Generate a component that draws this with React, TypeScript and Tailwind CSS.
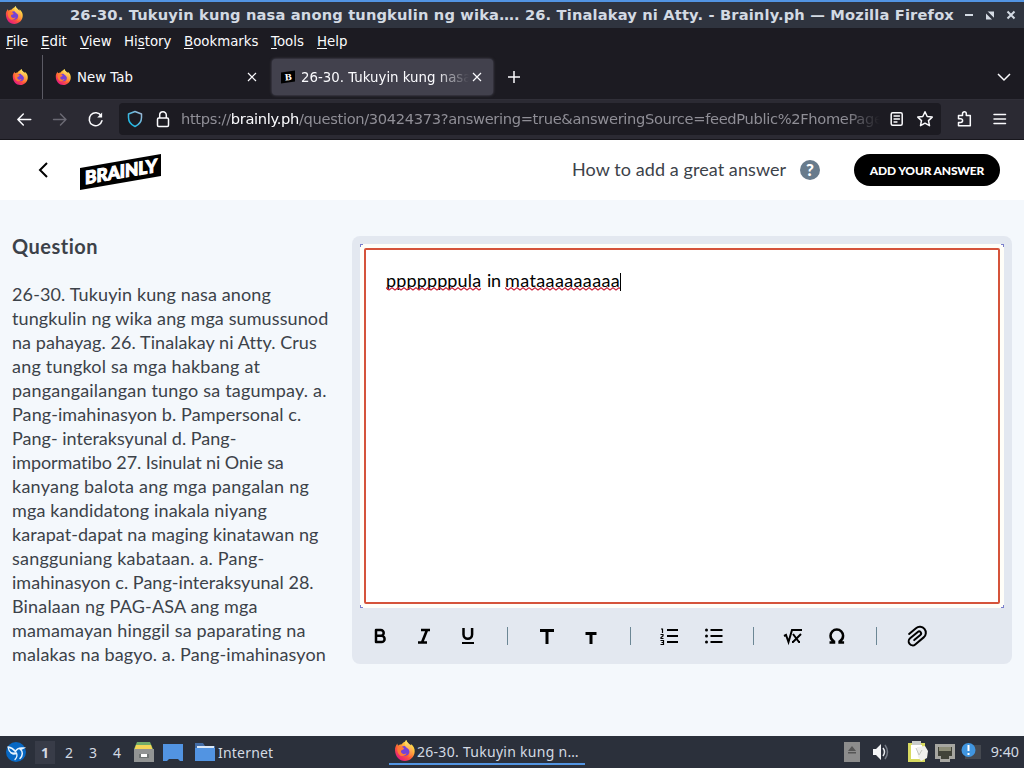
import React, { useState } from 'react';

const questionLines = [
  { text: '26-30. Tukuyin kung nasa anong', tracking: 'tracking-[0.13px]' },
  { text: 'tungkulin ng wika ang mga sumussunod', tracking: 'tracking-[0.11px]' },
  { text: 'na pahayag. 26. Tinalakay ni Atty. Crus', tracking: 'tracking-[0.07px]' },
  { text: 'ang tungkol sa mga hakbang at', tracking: 'tracking-[0.21px]' },
  { text: 'pangangailangan tungo sa tagumpay. a.', tracking: 'tracking-[0.2px]' },
  { text: 'Pang-imahinasyon b. Pampersonal c.', tracking: 'tracking-[0.08px]' },
  { text: 'Pang- interaksyunal d. Pang-', tracking: 'tracking-[0.01px]' },
  { text: 'impormatibo 27. Isinulat ni Onie sa', tracking: 'tracking-[-0.08px]' },
  { text: 'kanyang balota ang mga pangalan ng', tracking: 'tracking-[0.25px]' },
  { text: 'mga kandidatong inakala niyang', tracking: 'tracking-[0.14px]' },
  { text: 'karapat-dapat na maging kinatawan ng', tracking: 'tracking-[0.06px]' },
  { text: 'sangguniang kabataan. a. Pang-', tracking: 'tracking-[0.2px]' },
  { text: 'imahinasyon c. Pang-interaksyunal 28.', tracking: 'tracking-[0.03px]' },
  { text: 'Binalaan ng PAG-ASA ang mga', tracking: 'tracking-[0.17px]' },
  { text: 'mamamayan hinggil sa paparating na', tracking: 'tracking-[0.15px]' },
  { text: 'malakas na bagyo. a. Pang-imahinasyon', tracking: 'tracking-[0.13px]' },
];

const menuItems = [
  { before: '', key: 'F', after: 'ile', width: 'w-[35px]' },
  { before: '', key: 'E', after: 'dit', width: 'w-[39px]' },
  { before: '', key: 'V', after: 'iew', width: 'w-[44px]' },
  { before: 'Hi', key: 's', after: 'tory', width: 'w-[60px]' },
  { before: '', key: 'B', after: 'ookmarks', width: 'w-[87px]' },
  { before: '', key: 'T', after: 'ools', width: 'w-[46px]' },
  { before: '', key: 'H', after: 'elp', width: 'w-[40px]' },
];

function Firefox({ className }: { className: string }) {
  return (
    <svg viewBox="0 0 20 20" className={className}>
      <defs>
        <linearGradient id="fox" x1="0.85" y1="0.05" x2="0.2" y2="0.95">
          <stop offset="0" stopColor="#fff04a" />
          <stop offset="0.35" stopColor="#ffb43a" />
          <stop offset="0.62" stopColor="#ff5b35" />
          <stop offset="1" stopColor="#e31587" />
        </linearGradient>
        <linearGradient id="flame" x1="0.6" y1="0" x2="0.5" y2="1">
          <stop offset="0" stopColor="#fff36b" />
          <stop offset="1" stopColor="#ff7139" />
        </linearGradient>
      </defs>
      <path d="M1 10C.7 7 2 5 3.3 3.4c0 1 .2 1.500.6 2C5 4.400 6 4.200 7 4.300 8.500 3 9 2 10.500 1.700c.3-.7.8-1.300 1.500-1.700C12 1.800 13 3 14.300 4.200c.8.2 1.500.6 2 1.100-.1-.8-.3-1.300-.7-1.800C18.500 5 20 8 19.700 11.200 19.300 16.200 15.400 20 10.300 20 5 20 1.300 15.700 1 10Z" fill="url(#fox)" />
      <circle cx="10.200" cy="10.500" r="4.700" fill="#7542d6" />
      <path d="M11.500 0C12 2.500 16.500 4 17.500 8.200c1 4.300-1.200 8-5 8.800 3-2 3.400-5.500 1.500-7.900-1.600-1.900-3.800-2.100-3.500-5C10.600 2.400 10.800 1 11.500 0Z" fill="url(#flame)" />
      <path d="M3.500 6.500C6 5.400 8 6.500 9.600 8.200c-.3 1.200-1.800 1.200-2.700 1.900-.8 1 .1 2.900 1.900 3.200 1.300.2 2.200-.5 3.200-.7-1 2.200-3.400 3.200-5.700 2.300C3.500 13.500 2.500 9.500 3.500 6.500Z" fill="#ff7a35" />
    </svg>
  );
}

function TitleBar() {
  return (
    <div className="flex h-7 items-center border-t-2 border-[#5294e2] bg-[#2f343f]">
      <Firefox className="ml-[5px] h-[18px] w-[18px]" />
      <div className="ml-[47px] w-[888px] whitespace-nowrap text-[14.67px] font-bold tracking-[0.155px] text-[#d3dae3]">
        26-30. Tukuyin kung nasa anong tungkulin ng wika…. 26. Tinalakay ni Atty. - Brainly.ph — Mozilla Firefox
      </div>
      <svg viewBox="0 0 60 20" className="h-5 w-[60px] shrink-0" fill="none" stroke="#d3dae3">
        <path d="M7 10h8" strokeWidth="2" />
        <path d="M29.500 6.500h6.500v6.500zM28 8.500v6h6z" fill="#d3dae3" stroke="none" />
        <path d="m29 7 7 7" stroke="#2f343f" strokeWidth="1.500" />
        <path d="m49.500 6.500 7 7m0-7-7 7" strokeWidth="2" />
      </svg>
    </div>
  );
}

function MenuBar() {
  return (
    <div className="flex h-[27px] items-center pl-[6px] text-[13.33px] text-[#fbfbfe]">
      {menuItems.map((item) => (
        <div key={item.key + item.after} className={item.width + ' whitespace-nowrap'}>
          {item.before}
          <span className="underline underline-offset-2">{item.key}</span>
          {item.after}
        </div>
      ))}
    </div>
  );
}

function Close() {
  return (
    <svg viewBox="0 0 10 10" className="h-[10px] w-[10px] shrink-0" stroke="#fbfbfe" strokeWidth="1.200">
      <path d="m1 1 8 8m0-8-8 8" />
    </svg>
  );
}

function Tabs() {
  return (
    <div className="flex h-[44px] items-center text-[13.33px] text-[#fbfbfe]">
      <div className="flex h-full w-[43px] items-center border-r border-[#5b5a64] pl-3">
        <Firefox className="h-4 w-4" />
      </div>
      <div className="flex h-9 w-[229px] items-center pl-3">
        <Firefox className="h-4 w-4" />
        <span className="ml-[6px] w-[170px] pt-[2px]">New Tab</span>
        <Close />
      </div>
      <div className="flex h-9 w-[221px] items-center rounded bg-[#42414d] pl-[8px] shadow-[0_0_3px_#5b5a66]">
        <svg viewBox="0 0 16 16" className="h-4 w-4 shrink-0">
          <path d="M1 3.500 15 1.500v11L1 14.500Z" fill="#000" />
          <text x="4.800" y="11.200" fill="#fff" fontSize="8.500" fontWeight="900" fontFamily="DejaVu Serif, serif" transform="rotate(-5 8 8)">B</text>
        </svg>
        <span className="ml-[5px] w-[168px] shrink-0 overflow-hidden pt-[2px] whitespace-nowrap [mask-image:linear-gradient(to_right,black_80%,transparent_100%)]">
          26-30. Tukuyin kung nasa
        </span>
        <span className="ml-[3px]"><Close /></span>
      </div>
      <svg viewBox="0 0 14 14" className="ml-[14px] h-[14px] w-[14px]" stroke="#fbfbfe" strokeWidth="1.500">
        <path d="M7 1v12M1 7h12" />
      </svg>
      <svg viewBox="0 0 14 10" className="mr-[13px] ml-auto h-[10px] w-[14px]" fill="none" stroke="#fbfbfe" strokeWidth="1.500">
        <path d="m1 2 6 6 6-6" />
      </svg>
    </div>
  );
}

function NavBar() {
  return (
    <div className="flex h-[41px] items-center border-t border-b border-t-[#302f38] border-b-[#17161c] bg-[#2b2a33] pb-px">
      <svg viewBox="0 0 120 32" className="h-8 w-[119px] shrink-0" fill="none" stroke="#fbfbfe" strokeWidth="1.500" strokeLinecap="round" strokeLinejoin="round">
        <path d="M31 16.500H18m5.500-5.500L18 16.500l5.500 5.500" />
        <path d="M54 16.500h12.500m-5.500-5.500 5.500 5.500-5.500 5.500" stroke="#6a6973" />
        <path d="M102 12.800a6.500 6.500 0 1 0 .8 5" />
        <path d="M103 9.500v5h-5z" fill="#fbfbfe" stroke="none" />
      </svg>
      <div className="flex h-8 w-[822px] shrink-0 items-center rounded bg-[#1c1b22]">
        <svg viewBox="0 0 62 32" className="h-8 w-[62px] shrink-0" fill="none" strokeWidth="1.500">
          <defs>
            <linearGradient id="shield" x1="0" y1="1" x2="1" y2="0">
              <stop offset="0" stopColor="#00b8e8" />
              <stop offset="1" stopColor="#a9b9d6" />
            </linearGradient>
          </defs>
          <path d="M16 8.500 22.500 11v3.500c0 4-3 7.500-6.500 9-3.500-1.500-6.500-5-6.500-9V11Z" stroke="url(#shield)" strokeLinejoin="round" />
          <rect x="38.500" y="15" width="11" height="8.500" rx="1.200" stroke="#fbfbfe" />
          <path d="M40.700 15v-3a3.300 3.300 0 0 1 6.600 0v3" stroke="#fbfbfe" />
        </svg>
        <div className="w-[699px] overflow-hidden whitespace-nowrap text-[14.67px] tracking-[-0.34px] text-[#8f8e96] [mask-image:linear-gradient(to_right,black_95%,transparent_100%)]">
          https://<span className="text-[#fbfbfe]">brainly.ph</span>/question/30424373?answering=true&amp;answeringSource=feedPublic%2FhomePage
        </div>
        <svg viewBox="0 0 61 32" className="h-8 w-[61px] shrink-0" fill="none" stroke="#fbfbfe" strokeWidth="1.500" strokeLinejoin="round" strokeLinecap="round">
          <rect x="11.200" y="9.700" width="11" height="12.600" rx="1.500" />
          <path d="M14 13h5.500m-5.500 3h5.500m-5.500 3h3" strokeWidth="1.300" />
          <path d="m45 8.800 2.200 4.700 5 .6-3.700 3.500 1 5.100-4.500-2.500-4.500 2.500 1-5.100-3.700-3.500 5-.6Z" />
        </svg>
      </div>
      <svg viewBox="0 0 83 32" className="h-8 w-[83px] shrink-0" fill="none" stroke="#fbfbfe" strokeWidth="1.500" strokeLinejoin="round">
        <path d="M17.500 12.500h4v-1.800a1.900 1.900 0 0 1 3.800 0v1.800h4v10.300H17.500v-3.300h2.200a1.900 1.900 0 0 0 0-3.800h-2.200z" />
        <path d="M53 11.500h11.500M53 16h11.500M53 20.500h11.500" strokeLinecap="round" />
      </svg>
    </div>
  );
}

function BrainlyHeader() {
  return (
    <header className="flex h-[60px] items-center bg-white">
      <svg viewBox="0 0 10 16" className="ml-[38px] h-4 w-[10px]" fill="none" stroke="#000" strokeWidth="2">
        <path d="M9 1 2 8l7 7" />
      </svg>
      <svg viewBox="0 0 82 40" className="ml-[32px] h-10 w-[82px] overflow-visible">
        <path d="M0 18 81 4v22L0 40Z" fill="#000" />
        <text x="5" y="34" fill="#fff" stroke="#fff" strokeWidth="1.100" fontFamily="Lato, sans-serif" fontSize="18" fontWeight="900" textLength="72" lengthAdjust="spacingAndGlyphs" transform="matrix(1 -.173 0 1 0 1)">BRAINLY</text>
      </svg>
      <div className="ml-auto w-[228px] pb-[2px] whitespace-nowrap font-[Lato] text-[18px] tracking-[0.08px] text-[#3c4249]">How to add a great answer</div>
      <div className="flex h-5 w-5 items-center justify-center rounded-full bg-[#687b8c] font-[Lato] text-[17px] font-black text-white">?</div>
      <button className="mr-6 ml-[34px] h-8 w-[146px] rounded-full bg-black pt-px font-[Lato] text-[12px] font-black tracking-[-0.17px] text-white">
        ADD YOUR ANSWER
      </button>
    </header>
  );
}

function Toolbar() {
  return (
    <svg viewBox="352 608 660 56" className="h-14 w-[660px]" fill="none" stroke="#000" strokeWidth="2">
      <path d="M376 630h4.800a2.900 2.900 0 0 1 0 5.800H376zm0 5.800h5.500a3.100 3.100 0 0 1 0 6.200H376z" strokeWidth="2.500" strokeLinejoin="round" />
      <path d="M421 630h9m-12 12.500h9m0-12.500-5 12.500" strokeWidth="2.600" />
      <path d="M463.500 628v6.500a4.300 4.300 0 0 0 8.600 0V628" strokeWidth="2.500" />
      <path d="M462 643h12" />
      <path d="M507.500 627v18M630.500 627v18M753.500 627v18M876.500 627v18" stroke="#6c8795" strokeWidth="1" />
      <path d="M540 630.500h14m-7 0V644" strokeWidth="3" />
      <path d="M585.500 633.500h11m-5.500 0V644" strokeWidth="3" />
      <path d="M667 630h11M667 636h11M667 642h11" />
      <path d="M661 629h1.500v4m-2 1.500h2.500v1.500l-2 1.500v1h2.500m-3 2h3v4h-3m1-2h2" strokeWidth="1.200" />
      <path d="M710.500 630h12M710.500 636h12M710.500 642h12" />
      <path d="M706.500 629.900v.1m0 5.900v.1m0 5.900v.1" strokeWidth="3" strokeLinecap="round" />
      <path d="m784 636 2-1 2.500 7 3.500-12h10" />
      <path d="m793 634 6 8h1m1-8-8 8h-1" />
      <path d="M829.500 642.500h4.500v-1c-2.200-1.300-3.500-3.300-3.500-5.800a6.300 6.300 0 0 1 12.600 0c0 2.500-1.300 4.500-3.500 5.800v1h4.500" strokeWidth="2.500" />
      <path d="M912 638h8a2 2 0 0 0 0-4h-10a4 4 0 0 0 0 8h11a6 6 0 0 0 0-12h-9" strokeLinecap="round" transform="rotate(-40 916 636)" />
    </svg>
  );
}

function Misspelled({ word, className }: { word: string; className: string }) {
  return (
    <span className={className + ' h-6 whitespace-nowrap'}>
      {word}
      <svg className="-mt-[5px] block h-[4px] w-full" fill="none" stroke="#c8243c" strokeWidth="1.200">
        <defs>
          <pattern id="squiggle" width="6" height="4" patternUnits="userSpaceOnUse">
            <path d="M-1 1.500 0 .8 3 3 6 .8 7 1.500" />
          </pattern>
        </defs>
        <rect width="100%" height="4" fill="url(#squiggle)" stroke="none" />
      </svg>
    </span>
  );
}

function Editor() {
  const [answer] = useState(['pppppppula', 'mataaaaaaaaa']);

  return (
    <section className="ml-[352px] h-[428px] w-[660px] rounded-lg bg-[#e3e8f0] pt-2">
      <div className="relative mx-2 h-[364px] rounded-[3px] bg-[#fffef8] p-1">
        <span className="absolute top-0 left-0 h-[3px] w-[3px] border-t border-l border-[#7a7fcc]" />
        <span className="absolute top-0 right-0 h-[3px] w-[3px] border-t border-r border-[#7a7fcc]" />
        <span className="absolute bottom-0 left-0 h-[3px] w-[3px] border-b border-l border-[#7a7fcc]" />
        <span className="absolute right-0 bottom-0 h-[3px] w-[3px] border-r border-b border-[#7a7fcc]" />
        <div className="flex h-[356px] rounded-[2px] border-2 border-[#d5533a] bg-white pt-[18px] pl-5 font-[Lato] text-[18px] leading-6 text-black">
          <Misspelled word={answer[0]} className="w-[95px] tracking-[0.14px]" />
          <span className="ml-[6px] w-[18px] tracking-[-0.3px]">in</span>
          <Misspelled word={answer[1]} className="w-[115px] tracking-[0.38px]" />
          <span className="h-[18px] w-px translate-y-[5px] bg-black" />
        </div>
      </div>
      <Toolbar />
    </section>
  );
}

function Taskbar() {
  return (
    <footer className="flex h-8 items-center bg-[#2b303b] font-[Noto_Sans] text-[14px] text-[#d3dae3]">
      <svg viewBox="0 0 22 22" className="ml-[5px] h-[22px] w-[22px]" fill="none" stroke="#e9f5ff" strokeLinecap="round">
        <circle cx="11" cy="11" r="10" fill="#0768c4" stroke="none" />
        <path d="M3 6c3 .5 5.500 2 7.500 4.500C11.500 8 14 6.500 18.500 7l-3 1.500c2.500 2 2.500 6-.5 9" strokeWidth="1.500" />
        <path d="M3.500 7.500c.5 3 3 5 6.500 4.500M5 10.500c1 2.500 4 3.500 6.500 1.500 1 2.500.5 4.500-1.500 6.500" strokeWidth="1.300" />
      </svg>
      <div className="ml-[8px] flex h-[23px] text-center leading-[23px]">
        <span className="w-[20px] bg-[#383c48] font-bold">1</span>
        <span className="ml-[2px] w-6">2</span>
        <span className="w-6">3</span>
        <span className="w-6">4</span>
      </div>
      <svg viewBox="0 0 88 26" className="ml-px h-[26px] w-[88px] shrink-0">
        <path d="M7 3h13l3 7H4z" fill="#72ac69" />
        <path d="M6 6h15l2 6H4z" fill="#f4d657" />
        <path d="M4 10h20v13H4z" fill="#929494" />
        <path d="M9 15h10v4H9z" fill="#707575" />
        <path d="M11 15h6v3h-6z" fill="#fff" />
        <path d="M33 5h20v17h-3l-2-2h-9l-2 2h-4z" fill="#5294e2" />
        <path d="M65 4h8l2 3h10v15H65z" fill="#436ca5" />
        <path d="M67 7h17v4H67z" fill="#dce9f8" />
        <path d="M65 9h20v13H65z" fill="#5294e2" />
      </svg>
      <span className="w-[171px] pt-px tracking-[0.2px]">Internet</span>
      <div className="flex h-[29px] w-[196px] items-center self-start border-b-2 border-[#5294e2] pt-[2px]">
        <Firefox className="ml-[5px] h-[21px] w-[21px] shrink-0" />
        <span className="ml-[2px] pt-px whitespace-nowrap tracking-[0.28px]">26-30. Tukuyin kung n…</span>
      </div>
      <svg viewBox="841 0 145 32" className="mr-[5px] ml-auto h-8 w-[145px] shrink-0">
        <path d="M844 6h16v20h-16z" fill="#8c8c8c" />
        <path d="m852 10 4 5h-8zm-4 6h8v1.500h-8z" fill="#555" />
        <path d="M873 13h3l5-5v16l-5-5h-3z" fill="#f4f5f7" />
        <path d="M883 12q3 4 0 8" stroke="#e6e8ec" strokeWidth="1.500" fill="none" />
        <path d="M885 9q5 7 0 14" stroke="#737984" strokeWidth="1.500" fill="none" />
        <rect x="908" y="7" width="17" height="19" fill="#d7d960" />
        <path d="M911 9h11v14h-11z" fill="#fff" />
        <path d="M912 5h9v4h-9z" fill="#c9ccc9" />
        <path d="m917 11 8-1 3 5-1 7-6 3-3-4z" fill="#f0f0ed" />
        <path d="m916 12 3 7 3-5" stroke="#c4c6bf" fill="none" />
        <path d="M935 8h20v15h-5v3h-10v-3h-5z" fill="#a6a6a1" />
        <path d="M938 11h14v9h-3v3h-8v-3h-3z" fill="#414339" />
        <path d="M940 11v4m2-4v4m2-4v4m2-4v4m2-4v4m2-4v4" stroke="#d8d6b7" />
        <path d="M965 9h16v14h-16z" fill="#454950" />
        <circle cx="968.500" cy="14" r="7" fill="#4095df" />
        <path d="M968.500 9v6m0 2v2" stroke="#fff" strokeWidth="2" />
      </svg>
      <span className="mr-[5px] shrink-0 text-[14.300px]">9:40</span>
    </footer>
  );
}

export default function App() {
  return (
    <div className="flex h-[768px] w-[1024px] flex-col overflow-hidden bg-[#1c1b22] font-[DejaVu_Sans,sans-serif]">
      <TitleBar />
      <MenuBar />
      <Tabs />
      <NavBar />
      <BrainlyHeader />
      <main className="grid h-[536px] grid-cols-1 bg-[#f4f8fc]">
        <div className="col-start-1 row-start-1 pt-[34px] pl-3 font-[Lato] text-[#3c4249]">
          <h1 className="text-[20px] leading-6 font-bold tracking-[0.5px]">Question</h1>
          <div className="mt-[24px] w-[320px] text-[18px] leading-6">
            {questionLines.map((line) => (
              <p key={line.text} className={line.tracking + ' whitespace-nowrap'}>{line.text}</p>
            ))}
          </div>
        </div>
        <div className="col-start-1 row-start-1 pt-9">
          <Editor />
        </div>
      </main>
      <Taskbar />
    </div>
  );
}
